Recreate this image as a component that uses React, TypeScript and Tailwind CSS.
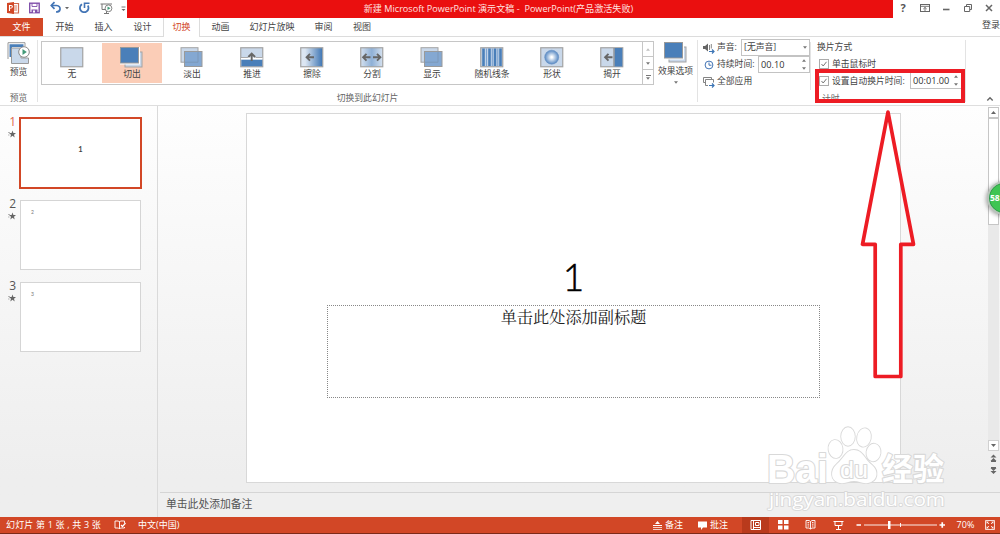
import React from "react";
import clsx from "clsx";

const tabs = [
  { label: "开始", width: "w-[41px]" },
  { label: "插入", width: "w-[37px]" },
  { label: "设计", width: "w-[41px]" },
  { label: "切换", width: "w-[37px]", active: true },
  { label: "动画", width: "w-[41px]" },
  { label: "幻灯片放映", width: "w-[62px]" },
  { label: "审阅", width: "w-[41px]" },
  { label: "视图", width: "w-[36px]" },
];

const transitions = ["无", "切出", "淡出", "推进", "擦除", "分割", "显示", "随机线条", "形状", "揭开"];

const Frame = ({ fill = "#c9d8ea" }: { fill?: string }) => (
  <rect x="0.75" y="0.75" width="22" height="19" fill={fill} stroke="#a3a3a3" strokeWidth="1.2" />
);

const Arrow = ({ x, y, rotate = 0 }: { x: number; y: number; rotate?: number }) => (
  <path
    d="M4 0H-3M0 -3.4L-3.4 0L0 3.4"
    fill="none"
    stroke="#666"
    strokeWidth="1.9"
    transform={`translate(${x} ${y}) rotate(${rotate})`}
  />
);

const TransitionIcon = ({ name }: { name: string }) => (
  <svg width="24" height="21" viewBox="0 0 24 21" className="shrink-0">
    <defs>
      <linearGradient id="wipe">
        <stop offset="0.2" stopColor="#dce6f2" />
        <stop offset="1" stopColor="#3c74b3" />
      </linearGradient>
      <linearGradient id="split">
        <stop offset="0" stopColor="#d5e1ef" />
        <stop offset="0.5" stopColor="#8fb0d6" />
        <stop offset="1" stopColor="#d5e1ef" />
      </linearGradient>
      <radialGradient id="ball">
        <stop offset="0.1" stopColor="#fff" />
        <stop offset="1" stopColor="#5587c2" />
      </radialGradient>
    </defs>
    {name === "无" && <Frame />}
    {name === "切出" && (
      <>
        <rect x="5" y="5" width="17" height="15" fill="#c9d8ea" stroke="#a3a3a3" />
        <rect x="0.5" y="0.5" width="18" height="15.5" fill="#4a7fb9" stroke="#fff" strokeWidth="3" />
        <rect x="0.5" y="0.5" width="18" height="15.5" fill="#4a7fb9" stroke="#999" />
      </>
    )}
    {(name === "淡出" || name === "显示") && (
      <>
        <rect x="1" y="0.7" width="17" height="14.5" fill="#c9d8ea" stroke="#a3a3a3" />
        <rect x="4.5" y="4.5" width="17.5" height="15" fill="#84a8d2" stroke="#9a9a9a" />
        <path d="M4.5 15.2H18V4.5" fill="none" stroke="#7c98b8" />
      </>
    )}
    {name === "推进" && (
      <>
        <Frame />
        <rect x="1.4" y="12.5" width="20.8" height="6.7" fill="#4a7fb9" />
        <path d="M1 11.5H22.5" stroke="#fff" strokeWidth="2" />
        <path d="M1 10.5H8M15.5 10.5H22.5" stroke="#999" strokeWidth="0.8" />
        <Arrow x={11.7} y={10} rotate={90} />
      </>
    )}
    {name === "擦除" && (
      <>
        <Frame fill="url(#wipe)" />
        <Arrow x={10} y={10.3} />
      </>
    )}
    {name === "分割" && (
      <>
        <Frame fill="url(#split)" />
        <Arrow x={6.5} y={10.3} />
        <Arrow x={17} y={10.3} rotate={180} />
      </>
    )}
    {name === "随机线条" && (
      <>
        <Frame />
        <path d="M3.5 1.5V19M9.5 1.5V19M15 1.5V19M20.5 1.5V19" stroke="#4a7fb9" strokeWidth="2.6" />
        <path d="M6.5 1.5V19M12.3 1.5V19M17.8 1.5V19" stroke="#7ba2d0" strokeWidth="1.2" />
      </>
    )}
    {name === "形状" && (
      <>
        <Frame />
        <circle cx="11.7" cy="10.2" r="7" fill="url(#ball)" stroke="#6e96c6" strokeWidth="0.6" />
      </>
    )}
    {name === "揭开" && (
      <>
        <Frame />
        <rect x="14.5" y="1" width="7.8" height="18.5" fill="#4a7fb9" />
        <path d="M14 1V19.5" stroke="#888" strokeWidth="1.2" />
        <Arrow x={8.5} y={10.3} />
      </>
    )}
  </svg>
);

const Caret = ({ up = false, className = "" }: { up?: boolean; className?: string }) => (
  <svg width="5" height="3" viewBox="0 0 5 3" className={className}>
    <path d={up ? "M0 3L2.5 0L5 3Z" : "M0 0H5L2.5 3Z"} fill="currentColor" />
  </svg>
);

const QuickAccess = () => (
  <svg width="127" height="18" viewBox="0 0 127 18" fill="none">
    <path d="M12 3.5H18.5V13H12" stroke="#d0694f" strokeWidth="1.2" />
    <path d="M14 6H17M14 8H17M14 10H17" stroke="#d0694f" strokeWidth="0.9" />
    <path d="M7 3L14 2V14L7 13Z" fill="#d24726" />
    <path d="M9.5 11V5.5H11Q12.5 5.7 12.3 7Q12 8.5 9.5 8.3" stroke="#fff" strokeWidth="1.1" />
    <rect x="29.7" y="3.2" width="9.5" height="9.5" stroke="#8151ab" strokeWidth="1.4" />
    <path d="M32 3V6.5H37V3" stroke="#8151ab" strokeWidth="0.9" />
    <path d="M31.5 9.5H37.5V13H31.5Z" fill="#8151ab" />
    <path d="M33 10.5H35V12.5H33Z" fill="#fff" />
    <path d="M51.5 5.5H56.5Q60.5 6 60 9.5Q59.5 12 56 12" stroke="#4274b5" strokeWidth="1.7" />
    <path d="M54.5 2.2L51.3 5.5L54.5 8.8" stroke="#4274b5" strokeWidth="1.7" />
    <path d="M65 7H69L67 9.2Z" fill="#666" />
    <path d="M82 4.2A4.3 4.3 0 1 0 87.8 5.5" stroke="#4274b5" strokeWidth="1.8" />
    <path d="M84.5 8V3.3H89.5" stroke="#4274b5" strokeWidth="1.6" />
    <path d="M100.5 4H112M102 4V9.5H105M106.5 10V13M104 13.5H109" stroke="#777" strokeWidth="1" />
    <circle cx="108.5" cy="8.3" r="3.4" fill="#fff" stroke="#777" strokeWidth="0.9" />
    <path d="M107.5 6.5V10L110.5 8.3Z" fill="#439a78" />
    <path d="M121.5 7H125.5" stroke="#777" />
    <path d="M121.5 9H125.5L123.5 11Z" fill="#666" />
  </svg>
);

const WindowButtons = () => (
  <svg width="107" height="18" viewBox="0 0 107 18" fill="none" stroke="#666">
    <text x="7.5" y="12" fontSize="11" fontWeight="700" fill="#555" stroke="none">
      ?
    </text>
    <rect x="27.5" y="4.5" width="9" height="7" />
    <path d="M27.5 6.3H36.5M32 11V7.5M30.3 9L32 7.4L33.7 9" strokeWidth="0.9" />
    <path d="M50 9.5H56.5" strokeWidth="1.6" />
    <path d="M73.5 6V4.5H78.5V9.5H77M71.5 6.5H76.7V11.5H71.5Z" />
    <path d="M93 5L99 11M99 5L93 11" strokeWidth="1.5" />
  </svg>
);

const Checkbox = () => (
  <svg width="10" height="10" viewBox="0 0 10 10" fill="#fff" className="shrink-0">
    <rect x="0.5" y="0.5" width="9" height="9" stroke="#ababab" />
    <path d="M2.5 5L4.2 7L7.5 2.8" fill="none" stroke="#777" />
  </svg>
);

const Spinner = ({ value, className }: { value: string; className: string }) => (
  <div className={clsx("flex h-[17px] items-center justify-between border border-[#c3c3c3] bg-white pr-[3px] pl-[2px]", className)}>
    <span className="text-[9.2px] text-[#333]">{value}</span>
    <span className="flex flex-col gap-[5px] text-[#777]">
      <Caret up className="w-[4px]" />
      <Caret className="w-[4px]" />
    </span>
  </div>
);

const Separator = () => <div className="mt-[3px] h-[62px] w-px shrink-0 bg-[#e3e3e3]" />;

const TitleBar = () => (
  <header className="flex h-[18px] bg-white">
    <QuickAccess />
    <div className="flex h-[18px] w-[766px] items-center justify-center bg-[#ea0f0f] text-[9.1px] whitespace-pre text-[#ffe3e0]">
      <span className="mr-[23px]">新建 Microsoft PowerPoint 演示文稿 -  PowerPoint(产品激活失败)</span>
    </div>
    <WindowButtons />
  </header>
);

const TabBar = () => (
  <nav className="flex h-[19px] border-b border-[#dcdcdc] bg-white text-[9px] text-[#444]">
    <div className="mr-px flex w-[43px] items-center justify-center bg-[#d24726] text-white">文件</div>
    {tabs.map((tab) => (
      <div
        key={tab.label}
        className={clsx(
          "flex items-center justify-center",
          tab.width,
          tab.active && "-mb-px border-x border-[#dcdcdc] bg-white pb-px text-[#d24726]"
        )}
      >
        {tab.label}
      </div>
    ))}
    <div className="ml-auto flex w-[18px] items-start overflow-hidden whitespace-nowrap">登录</div>
  </nav>
);

const Gallery = () => (
  <div className="mt-[4px] flex h-[44px] w-[613px] border border-[#c6c6c6]">
    {transitions.map((name) => (
      <div
        key={name}
        className={clsx("flex w-[60px] shrink-0 flex-col items-center pt-[5px]", name === "切出" && "my-px bg-[#fbcdb7] !pt-[4px]")}
      >
        <TransitionIcon name={name} />
        <span className="leading-[12px]">{name}</span>
      </div>
    ))}
    <div className="flex grow flex-col border-l border-[#c6c6c6] text-[#777]">
      <div className="flex h-[14px] items-center justify-center text-[#c0c0c0]">
        <Caret up className="w-[4px]" />
      </div>
      <div className="flex h-[14px] items-center justify-center border-y border-[#c6c6c6]">
        <Caret className="w-[4px]" />
      </div>
      <div className="flex h-[14px] flex-col items-center justify-center gap-px">
        <div className="h-px w-[5px] bg-[#777]" />
        <Caret className="w-[4px]" />
      </div>
    </div>
  </div>
);

const Ribbon = () => (
  <section className="flex h-[69px] border-b border-[#dedede] bg-white text-[8.8px] leading-[12px] text-[#444]">
    <div className="flex w-[37px] flex-col items-center pt-[5px]">
      <svg width="24" height="23" viewBox="0 0 24 23" fill="none" stroke="#999">
        <path d="M1 17V0.7H18V4" />
        <path d="M2.5 15V2.2H16.5V5H5V15Z" fill="#4a7fb9" stroke="none" />
        <path d="M4.5 6H14V16H21.5V21.5H4.5Z" fill="#c9d8ea" />
        <circle cx="17" cy="10" r="5.3" fill="#fff" stroke="#888" />
        <path d="M15.5 7L19.8 10L15.5 13Z" fill="#439a78" stroke="none" />
      </svg>
      <span className="mt-[1px]">预览</span>
      <span className="mt-[14px] text-[#666]">预览</span>
    </div>
    <Separator />
    <div className="ml-[3px] flex w-[613px] flex-col items-center">
      <Gallery />
      <span className="mt-[7px] mr-[-40px] text-[#666]">切换到此幻灯片</span>
    </div>
    <div className="flex w-[43px] flex-col items-center pt-[5px] whitespace-nowrap">
      <TransitionIcon name="切出" />
      <span className="mt-[2px]">效果选项</span>
      <Caret className="mt-[4px] w-[4px] text-[#777]" />
    </div>
    <Separator />
    <div className="flex w-[112px] flex-col pt-[2px] pl-[5px]">
      <div className="flex h-[17px] items-center">
        <svg width="12" height="12" viewBox="0 0 12 12" fill="none" className="mr-[2px]">
          <path d="M0 4H2L5 1.5V9.5L2 7H0Z" fill="#666" />
          <path d="M6.5 3V8M8.3 2V6.5" stroke="#888" />
          <path d="M6 9.5H11M9 7.5L11 9.5L9 11.5" stroke="#3d75b5" strokeWidth="1.2" />
        </svg>
        <span className="w-[24px] pb-[2px] whitespace-nowrap">声音:</span>
        <div className="flex h-[17px] w-[69px] items-center justify-between border border-[#c3c3c3] px-[2px] pb-px">
          [无声音]
          <Caret className="w-[4px] text-[#777]" />
        </div>
      </div>
      <div className="flex h-[17px] items-center">
        <svg width="12" height="12" viewBox="0 0 12 12" fill="none" stroke="#4274b5" className="mr-[2px]">
          <circle cx="6" cy="6" r="3.9" />
          <path d="M6 3.5V6.2H8.5" />
        </svg>
        <span className="w-[41px] pb-[2px] whitespace-nowrap">持续时间:</span>
        <Spinner value="00.10" className="w-[52px]" />
      </div>
      <div className="flex h-[17px] items-center">
        <svg width="12" height="12" viewBox="0 0 12 12" fill="none" stroke="#777" className="mr-[2px]">
          <path d="M2 6.5H0.5V1.5H8.5V3M5 9.5H2.5V3.5H10.5V6.5" strokeWidth="0.9" />
          <path d="M6 9.5H11M9 7.5L11 9.5L9 11.5" stroke="#3d75b5" strokeWidth="1.2" />
        </svg>
        <span className="pb-px">全部应用</span>
      </div>
    </div>
    <div className="mt-[5px] h-[48px] w-px bg-[#e3e3e3]" />
    <div className="flex w-[154px] flex-col pt-[1px] pl-[6px]">
      <div className="flex h-[17px] items-center">换片方式</div>
      <div className="flex h-[17px] items-center gap-[3px] pl-[2px]">
        <Checkbox />
        单击鼠标时
      </div>
      <div className="flex h-[17px] items-center gap-[3px] pl-[2px]">
        <Checkbox />
        <span className="w-[75px] whitespace-nowrap">设置自动换片时间:</span>
        <Spinner value="00:01.00" className="w-[52px]" />
      </div>
      <span className="mt-[4px] ml-[5px] text-[#666]">计时</span>
    </div>
    <Separator />
    <svg width="8" height="6" viewBox="0 0 8 6" className="mt-[59px] ml-[20px]">
      <path d="M1.3 4.5L4 1.8L6.7 4.5" fill="none" stroke="#666" strokeWidth="1.4" />
    </svg>
  </section>
);

const Thumbnail = ({ index }: { index: number }) => {
  const active = index === 1;
  return (
    <div className="flex h-[82px]">
      <div className="flex w-[19px] flex-col items-end pr-[3px]">
        <span className={clsx("text-[12px] leading-[10px]", active ? "text-[#e0674c]" : "text-[#555]")}>{index}</span>
        <svg width="8" height="8" viewBox="0 0 8 8" className="mt-[3px]">
          <path d="M4.5 0.5L5.4 3H8L6 4.7L6.7 7.5L4.5 5.8L2.3 7.5L3 4.7L1 3H3.6Z" fill="#666" />
          <path d="M0 2.5H2M0 5H1.5" stroke="#999" strokeWidth="0.7" />
        </svg>
      </div>
      {active ? (
        <div className="flex h-[72px] w-[123px] items-center justify-center border-2 border-[#d24726] bg-white pb-[7px] font-['Lato'] text-[7.5px] font-bold text-[#444]">
          1
        </div>
      ) : (
        <div className="mt-[1px] ml-[1px] h-[70px] w-[121px] border border-[#d5d5d5] bg-white pt-[8px] pl-[10px] font-['Lato'] text-[5px] leading-[6px] text-[#777]">
          {index}
        </div>
      )}
    </div>
  );
};

const Scrollbar = () => (
  <div className="flex w-[12px] flex-col items-start pt-[1px] text-[#666]">
    <div className="flex h-[11px] w-[11px] items-center justify-center border border-[#c6c6c6] bg-white">
      <Caret up />
    </div>
    <div className="h-[322px] w-[11px] bg-[#e9e9e9]">
      <div className="h-[107px] border border-[#c6c6c6] bg-white" />
    </div>
    <div className="flex h-[11px] w-[11px] items-center justify-center border border-[#d0d0d0] bg-white">
      <Caret />
    </div>
    <svg width="7" height="21" viewBox="0 0 7 21" fill="#666" className="mt-[3px] ml-[2px]">
      <path d="M0.5 3.5L3.5 0.5L6.5 3.5ZM0.5 7L3.5 4L6.5 7ZM1 7H6V8H1Z" />
      <path d="M1 13H6V14H1ZM0.5 14L3.5 17L6.5 14ZM0.5 17L3.5 20L6.5 17Z" />
    </svg>
  </div>
);

const Workspace = () => (
  <main className="flex h-[411px] bg-linear-to-b from-[#fefefe] to-[#eeeeee] to-90%">
    <aside className="w-[158px] border-r border-[#dadada] pt-[11px]">
      {[1, 2, 3].map((index) => (
        <Thumbnail key={index} index={index} />
      ))}
    </aside>
    <div className="flex w-[842px] flex-col pl-[2px]">
      <div className="flex h-[386px]">
        <div className="mt-[7px] ml-[86px] flex h-[370px] w-[655px] flex-col items-center border border-[#d8d8d8] bg-white">
          <div className="mt-[138px] font-['Lato'] text-[37px] leading-[49px] font-light text-black [-webkit-text-stroke:0.5px_black]">
            1
          </div>
          <div className="mt-[4px] h-[93px] w-[493px] border border-dotted border-[#888] text-center font-['Liberation_Serif','Noto_Serif_CJK_SC','Noto_Sans_CJK_SC',serif] text-[16.2px] leading-[24px] text-[#222]">
            单击此处添加副标题
          </div>
        </div>
        <div className="w-[87px]" />
        <Scrollbar />
      </div>
      <div className="flex h-[25px] items-center border-t border-[#d5d5d5] bg-[#efefef] pb-px pl-[6px] text-[10.8px] text-[#555]">
        单击此处添加备注
      </div>
    </div>
  </main>
);

const StatusBar = () => (
  <footer className="flex h-[17px] items-center border-b border-[#7d2a18] bg-[#d24726] text-[9px] whitespace-pre text-white">
    <span className="w-[114px] pl-[6px] tracking-[0.18px]">幻灯片 第 1 张 , 共 3 张</span>
    <svg width="12" height="10" viewBox="0 0 12 10" fill="none" stroke="#fff" strokeWidth="0.9">
      <path d="M5.5 1.5V9L4.5 8H1V1H4.5L5.5 2L6.5 1H10.5V3M5.5 9L6.5 8H10.5V7" />
      <path d="M7 5L8.5 6.5L11.5 3" strokeWidth="1.2" />
    </svg>
    <span className="ml-[12px] w-[515px]">中文(中国)</span>
    <svg width="9" height="9" viewBox="0 0 9 9" fill="#fff">
      <path d="M2 3L4.5 0L7 3ZM0 4H9V5H0ZM0 6H9V6.8H0ZM0 8H9V8.8H0Z" />
    </svg>
    <span className="ml-[3px] w-[33px]">备注</span>
    <svg width="9" height="9" viewBox="0 0 9 9" fill="#fff">
      <path d="M0 0.5H9V6.5H5L3 9V6.5H0Z" />
    </svg>
    <span className="ml-[3px] w-[32px]">批注</span>
    <svg width="257" height="16" viewBox="0 0 257 16" fill="none" stroke="#fff">
      <rect x="0" y="0" width="27" height="16" fill="#b93a1c" stroke="none" />
      <path d="M9 3.5H18.5V12.5H9ZM11.5 3.5V12.5M13.5 5.5H17V8.5H13.5ZM12 10.5H18" />
      <path d="M36 3H40.5V7H36ZM42 3H46.5V7H42ZM36 8.5H40.5V12.5H36ZM42 8.5H46.5V12.5H42Z" fill="#fff" stroke="none" />
      <path
        d="M68.5 4.5V12L67 11H64V3.5H67L68.5 4.5L70 3.5H73V11H70L68.5 12M65.5 5.5H67.2M65.5 7.2H67.2M65.5 9H67.2M70 5.5H71.5M70 7.2H71.5M70 9H71.5"
        strokeWidth="0.9"
      />
      <path d="M91.5 4.5H101.5M93 4.5V8.5H100V4.5M96.5 8.5V12M94 12.5H99" />
      <path d="M114.5 8H119M197.5 8H203M200.25 5.3V10.7" strokeWidth="1.7" />
      <path d="M122 8H195M158.5 6V10" strokeWidth="0.9" />
      <rect x="146" y="4" width="2.5" height="8" fill="#fff" stroke="none" />
      <text x="214.5" y="11.3" fontSize="9" fill="#fff" stroke="none" textLength="18">
        70%
      </text>
      <path
        d="M243.5 3.5H252.5V12.5H243.5ZM244.5 4.5L247 7M245 6.5V5H246.5M251.5 4.5L249 7M249.5 5H251V6.5M244.5 11.5L247 9M245 9.5V11H246.5M251.5 11.5L249 9M249.5 11H251V9.5"
        strokeWidth="0.8"
      />
    </svg>
  </footer>
);

const Watermark = () => (
  <svg
    width="186"
    height="90"
    viewBox="0 0 186 90"
    fill="#ffffff"
    stroke="#d9d9d9"
    strokeWidth="2.2"
    strokeLinejoin="round"
    paintOrder="stroke"
    className="pointer-events-none absolute top-[424px] left-[765px]"
  >
    <text x="2" y="58.5" fontSize="40" fontWeight="700" textLength="61" lengthAdjust="spacingAndGlyphs" className="font-['Liberation_Sans']">
      Bai
    </text>
    <g strokeWidth="1.8">
      <ellipse cx="70.5" cy="25" rx="7" ry="9" transform="rotate(-8 70.5 25)" />
      <ellipse cx="83" cy="12.5" rx="6.8" ry="9.3" />
      <ellipse cx="99" cy="13.5" rx="6.8" ry="9.3" transform="rotate(12 99 13.5)" />
      <ellipse cx="108.5" cy="28.5" rx="7" ry="8.8" transform="rotate(8 108.5 28.5)" />
      <path d="M89 26C98 26 99 35 107 41C114 47 113 57 103 59C97 60 94 57 89 57C84 57 81 60 75 59C65 57 65 46 72 40C79 34 81 26 89 26Z" />
    </g>
    <text x="75" y="54" fontSize="24" textLength="28" lengthAdjust="spacingAndGlyphs" className="font-['Liberation_Sans']">
      du
    </text>
    <text x="117" y="56" fontSize="31" fontWeight="700" textLength="62">
      经验
    </text>
    <text x="4" y="82" fontSize="18.5" textLength="176" lengthAdjust="spacingAndGlyphs" strokeWidth="1.8">
      jingyan.baidu.com
    </text>
  </svg>
);

// red marker drawn over the auto-advance setting
const Annotation = () => (
  <>
    <div className="pointer-events-none absolute top-[69px] left-[815px] h-[34px] w-[150px] border-4 border-[#ed1c24]" />
    <svg width="60" height="275" viewBox="0 0 60 275" className="pointer-events-none absolute top-[106px] left-[858px]">
      <path
        d="M30 6L4.5 138.3H17.2V270.5H42.8V138.3H55.5Z"
        fill="none"
        stroke="#ed1c24"
        strokeWidth="3.7"
        strokeLinejoin="round"
      />
    </svg>
  </>
);

const FloatingBall = () => (
  <div className="absolute top-[181px] left-[987px] flex h-[34px] w-[34px] items-center rounded-full border-2 border-[#b9c4bb] bg-[#3fc553] pl-px text-[8.5px] font-bold text-white shadow-[-1px_1px_4px_rgba(0,0,0,0.35)] inset-ring inset-ring-[#31984a]">
    58
  </div>
);

const App = () => {
  return (
    <div className="relative h-[534px] w-[1000px] overflow-hidden bg-white font-['Open_Sans','Noto_Sans_CJK_SC',sans-serif]">
      <TitleBar />
      <TabBar />
      <Ribbon />
      <Workspace />
      <StatusBar />
      <Watermark />
      <Annotation />
      <FloatingBall />
    </div>
  );
};

export default App;
